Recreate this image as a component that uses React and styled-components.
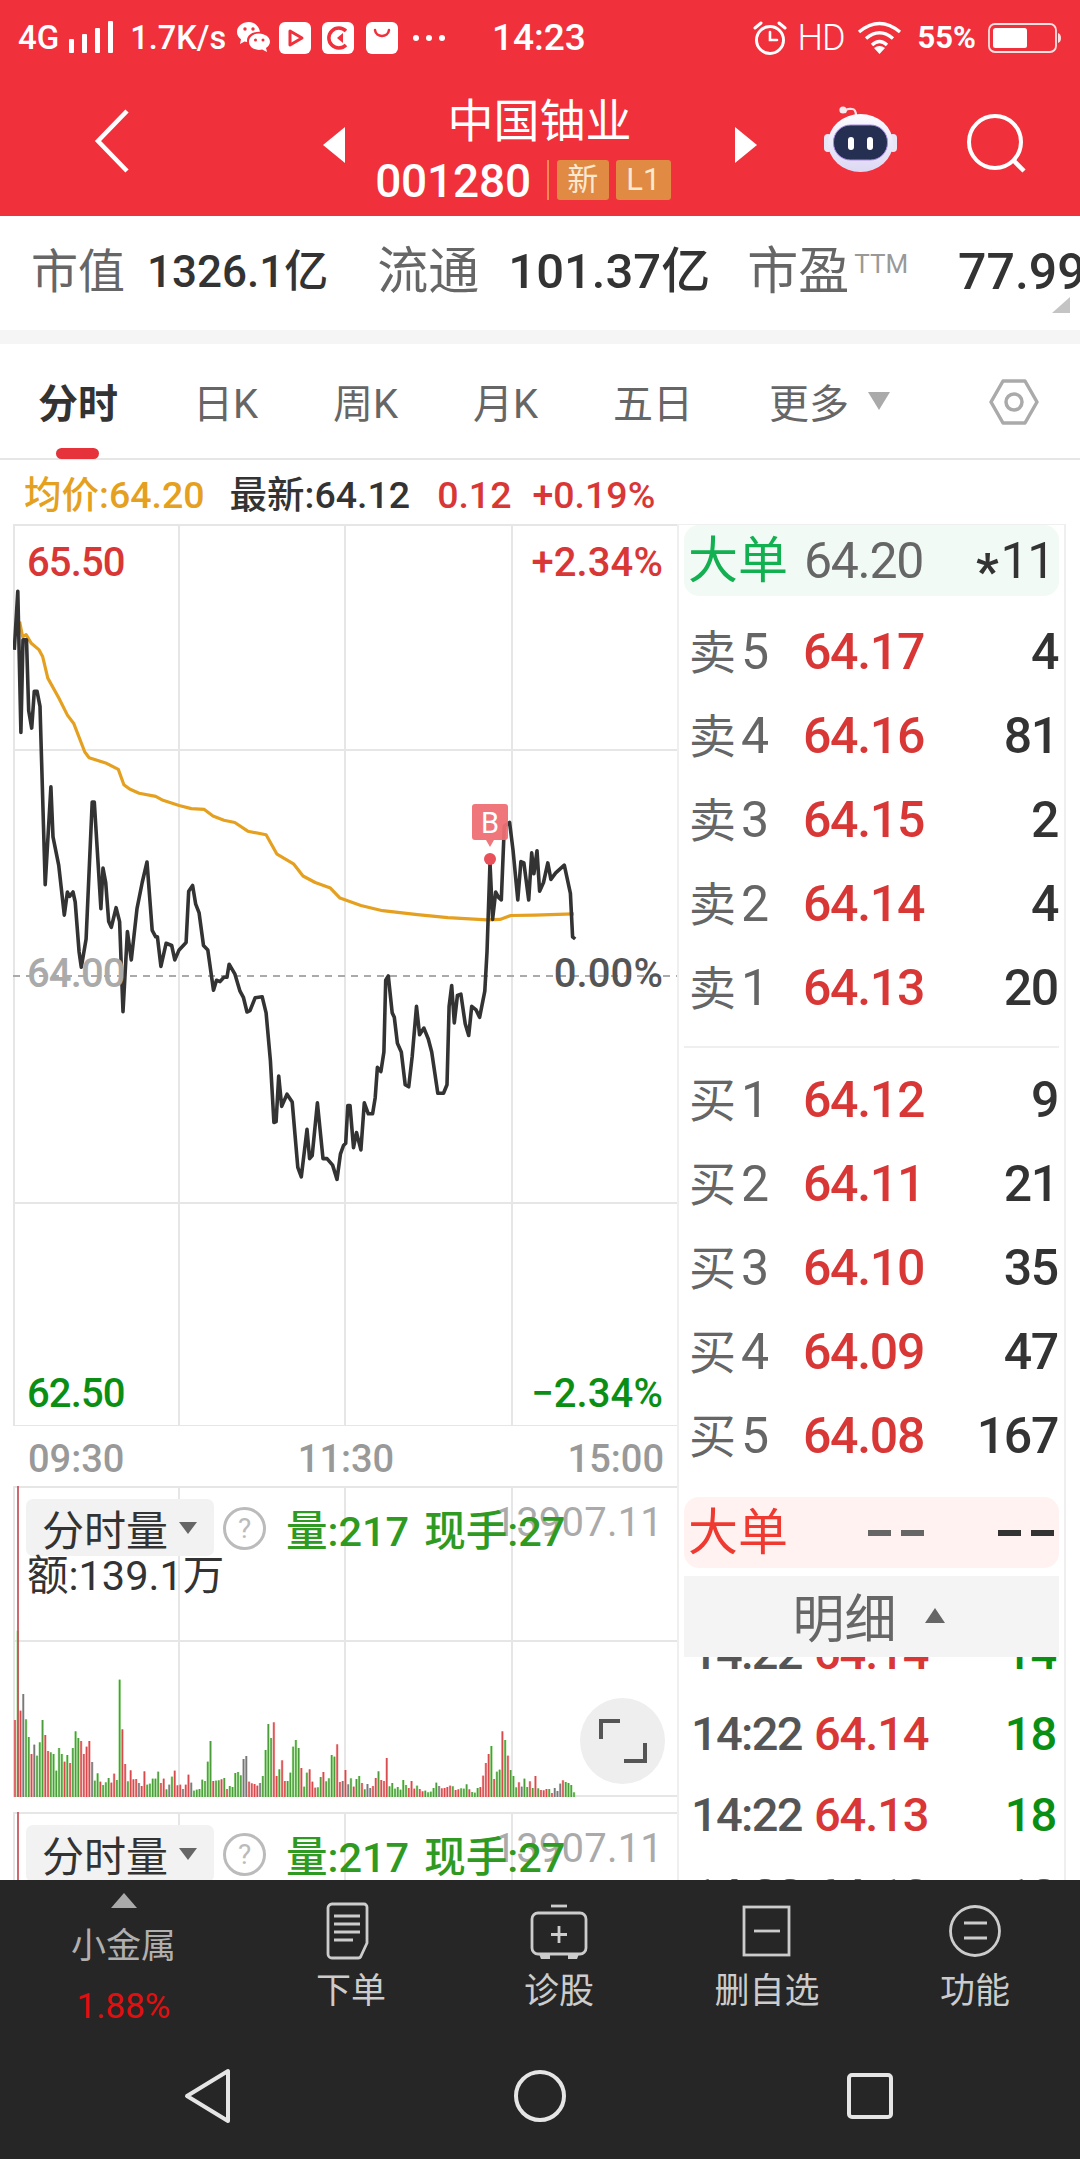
import React from 'react';
import styled, { createGlobalStyle } from 'styled-components';

const Global = createGlobalStyle`
  html, body { margin: 0; padding: 0; background: #fff; }
  body { font-family: Roboto, "Noto Sans CJK SC", sans-serif; }
  * { box-sizing: border-box; }
`;

const RED = '#d93636';
const GREEN = '#0a8f14';

const Page = styled.div`
  width: 1080px; height: 2160px; overflow: hidden; display: flex; flex-direction: column; background: #fff;
`;
const Header = styled.header`
  height: 216px; background: #f0303b; color: #fff; display: flex; flex-direction: column; flex: none;
`;
const StatusBar = styled.div`
  height: 76px; display: flex; align-items: center; padding: 0 18px; font-size: 30px; line-height: 36px; font-weight: 500;
`;
const StatusLeft = styled.div`
  width: 474px; display: flex; align-items: center;
`;
const StatusRight = styled.div`
  margin-left: auto; display: flex; align-items: center;
`;
const StatusText = styled.span`
  margin-left: ${p => p.$ml || 0}px; font-size: ${p => p.$size || 30}px; font-weight: ${p => p.$weight || 500};
  letter-spacing: ${p => p.$ls || 0}px; white-space: nowrap;
`;
const Clock = styled.span`
  font-size: 37px; font-weight: 500; letter-spacing: 0;
`;
const NavBar = styled.div`
  height: 140px; display: flex; align-items: flex-start; position: relative;
`;
const BackIcon = styled.svg`
  width: 40px; height: 66px; margin: 32px 0 0 94px; flex: none;
`;
const Arrow = styled.svg`
  width: 24px; height: 36px; margin: 51px 0 0 ${p => p.$ml}px; flex: none;
`;
const TitleBlock = styled.div`
  width: 387px; display: flex; flex-direction: column; align-items: center; flex: none;
`;
const Title = styled.div`
  font-size: 46px; line-height: 52px; margin-top: 19px;
`;
const CodeRow = styled.div`
  display: flex; align-items: center; height: 42px; margin-top: 12px; margin-right: 26px;
`;
const Code = styled.span`
  font-size: 46px; line-height: 42px; letter-spacing: -.2px; font-weight: 500; position: relative; top: 1px;
`;
const Sep = styled.i`
  width: 2px; height: 40px; background: #f08a50; margin: 0 8px 0 16px;
`;
const Badge = styled.span`
  height: 40px; width: ${p => p.$w}px; margin-right: 7px; background: #e08a44; color: #fbe8d0; border-radius: 3px;
  font-size: 31px; line-height: 40px; text-align: center;
`;
const Robot = styled.svg`
  width: 74px; height: 68px; margin: 30px 0 0 66px; flex: none;
`;
const Search = styled.svg`
  width: 62px; height: 62px; margin: 38px 0 0 68px; flex: none;
`;

const Stats = styled.div`
  height: 114px; flex: none; position: relative; overflow: hidden; display: flex; align-items: center; padding: 0 0 3px 31px; white-space: nowrap;
`;
const StatLabel = styled.span`
  font-size: ${p => p.$size}px; line-height: 60px; color: #666; margin-left: ${p => p.$ml || 0}px;
`;
const StatValue = styled.span`
  font-size: ${p => p.$size}px; line-height: 60px; color: #333; font-weight: 500; margin-left: ${p => p.$ml || 0}px;
`;
const Sup = styled.span`
  font-size: 26px; line-height: 30px; color: #999; align-self: flex-start; margin-top: 33px; margin-left: 5px;
`;
const CornerMark = styled.i`
  position: absolute; right: 10px; bottom: 17px; width: 0; height: 0;
  border-style: solid; border-width: 0 0 16px 18px; border-color: transparent transparent #c4c4c4 transparent;
`;
const Band = styled.div`
  height: 14px; background: #f5f5f5; flex: none;
`;
const Tabs = styled.nav`
  height: 116px; flex: none; position: relative; border-bottom: 2px solid #e6e6e6; display: flex; align-items: center;
`;
const Tab = styled.span`
  position: absolute; left: ${p => p.$x}px; top: 36px; font-size: 40px; line-height: 50px; white-space: nowrap;
  color: ${p => p.$active ? '#333' : '#666'}; font-weight: ${p => p.$active ? 700 : 400};
`;
const Indicator = styled.i`
  position: absolute; left: 56px; bottom: -1px; width: 43px; height: 11px; background: #e6323a; border-radius: 6px;
`;
const MoreTri = styled.i`
  position: absolute; left: 868px; top: 48px; width: 0; height: 0; border-style: solid; border-width: 18px 11px 0 11px;
  border-color: #aaa transparent transparent transparent;
`;
const HexIcon = styled.svg`
  position: absolute; left: 989px; top: 34px; width: 50px; height: 48px;
`;
const Info = styled.div`
  height: 64px; flex: none; display: flex; align-items: center; padding: 6px 0 0 24px; font-size: 37.5px; line-height: 50px; white-space: nowrap; font-weight: 500;
`;
const InfoItem = styled.span`
  color: ${p => p.$c}; margin-left: ${p => p.$ml || 0}px;
`;
const Main = styled.div`
  flex: none; height: 1356px; display: flex; padding-left: 13px; overflow: hidden;
`;
const LeftCol = styled.div`
  width: 664px; flex: none; display: flex; flex-direction: column;
`;
const Chart = styled.div`
  width: 664px; height: 902px; flex: none; position: relative;
`;
const ChartSvg = styled.svg`
  display: block; width: 664px; height: ${p => p.$h}px;
`;
const AxisLabel = styled.span`
  position: absolute; font-size: 40px; line-height: 48px; font-weight: 500; white-space: nowrap; color: ${p => p.$c};
  top: ${p => p.$top}px;
  ${p => p.$left != null ? `left: ${p.$left}px; letter-spacing: -.9px;` : `right: ${p.$right}px; letter-spacing: .1px;`}
`;
const TimeAxis = styled.div`
  height: 60px; flex: none; display: flex; justify-content: space-between; align-items: center; padding: 5px 13px 0 15px;
  font-size: 38px; line-height: 48px; color: #999; font-weight: 500;
`;
const VolPanel = styled.div`
  width: 664px; height: ${p => p.$h}px; flex: none; position: relative; margin-top: ${p => p.$mt || 0}px;
`;
const VolHead = styled.div`
  position: absolute; left: 13px; top: 13px; right: 0; display: flex; align-items: flex-start;
`;
const Pill = styled.div`
  width: 188px; height: 57px; background: #f2f2f2; border-radius: 7px; display: flex; align-items: center; padding: 9px 0 0 16px; font-size: 42px; line-height: 48px; color: #333; flex: none;
`;
const PillTri = styled.i`
  margin: -8px 0 0 11px; width: 0; height: 0; border-style: solid; border-width: 12px 9px 0 9px; border-color: #666 transparent transparent transparent;
`;
const Help = styled.span`
  width: 43px; height: 43px; border-radius: 50%; border: 3px solid #bbb; color: #bbb; margin: 8px 0 0 9px; flex: none;
  font-size: 28px; line-height: 37px; text-align: center;
`;
const VolText = styled.span`
  color: #2f9a22; font-size: 41.5px; line-height: 50px; font-weight: 500; margin: 8px 0 0 ${p => p.$ml}px; white-space: nowrap; position: relative; z-index: 1;
`;
const MaxVal = styled.span`
  position: absolute; right: 14px; top: -1px; color: #aaa; font-size: 40px; line-height: 50px; white-space: nowrap; letter-spacing: .2px;
`;
const Amount = styled.div`
  position: absolute; left: 14px; top: 65px; color: #333; font-size: 41.5px; line-height: 50px; white-space: nowrap;
`;
const FullBtn = styled.div`
  position: absolute; left: 567px; top: 212px; width: 85px; height: 86px; border-radius: 50%; background: #eee; display: flex; align-items: center; justify-content: center;
`;

const RightCol = styled.aside`
  width: 389px; flex: none; border-left: 2px solid #efefef; border-right: 2px solid #efefef; border-top: 2px solid #efefef; padding: 0 5px; margin-top: -1px; display: flex; flex-direction: column;
`;
const BigRow = styled.div`
  height: 71px; flex: none; background: ${p => p.$bg}; border-radius: 15px; display: grid; grid-template-columns: 116px 1fr auto; align-items: center; padding: 0 5px 0 4px; margin-top: ${p => p.$mt || 0}px;
`;
const BigLabel = styled.span`
  font-size: 50px; line-height: 60px; color: ${p => p.$c};
`;
const QuoteList = styled.div`
  display: flex; flex-direction: column; margin-top: ${p => p.$mt}px; flex: none;
`;
const Quote = styled.div`
  height: 84px; display: grid; grid-template-columns: 114px 1fr auto; align-items: center; padding: 0 1px 0 5px;
`;
const QLabel = styled.span`
  font-size: 47px; line-height: 60px; color: #666; white-space: nowrap;
`;
const QDigit = styled.span`
  font-size: 50px; margin-left: 5px; letter-spacing: -1px;
`;
const Num = styled.span`
  font-size: 50px; line-height: 60px; letter-spacing: -1.3px; color: ${p => p.$c}; font-weight: ${p => p.$w || 400}; white-space: nowrap;
`;
const Star = styled.span`
  display: inline-block; font-size: 50px; line-height: 50px; margin-right: 3px; font-weight: 700; transform: translateY(11px);
`;
const Dashes = styled.span`
  display: flex; gap: 10px; justify-content: ${p => p.$end ? 'flex-end' : 'flex-start'}; padding-left: ${p => p.$pl || 0}px;
`;
const Dash = styled.i`
  width: 23px; height: 6px; background: ${p => p.$c};
`;
const Divider = styled.div`
  height: 2px; background: #efefef; margin-top: 16px; flex: none;
`;
const DetailHead = styled.div`
  height: 81px; flex: none; margin-top: 8px; background: #f4f4f4; display: flex; align-items: center; justify-content: center; padding: 8px 6px 0 0; font-size: 52px; line-height: 60px; color: #666; position: relative; z-index: 1;
`;
const UpTri = styled.i`
  margin: -10px 0 0 28px; width: 0; height: 0; border-style: solid; border-width: 0 10.5px 15px 10.5px; border-color: transparent transparent #666 transparent;
`;
const DetailList = styled.div`
  flex: 1; min-height: 0; overflow: hidden;
`;
const DetailInner = styled.div`
  margin-top: -45px;
`;
const DetailRow = styled.div`
  height: 81px; display: grid; grid-template-columns: 123px 1fr auto; align-items: center; padding: 0 3px 0 7px;
`;
const DNum = styled.span`
  font-size: 47px; line-height: 60px; letter-spacing: ${p => p.$ls || -1.1}px; font-weight: 500; color: ${p => p.$c}; white-space: nowrap;
`;

const Toolbar = styled.footer`
  height: 279px; flex: none; background: #262626; display: flex; flex-direction: column;
`;
const ToolRow = styled.div`
  height: 172px; display: grid; grid-template-columns: 247px repeat(4, 208px); flex: none;
`;
const ToolItem = styled.div`
  display: flex; flex-direction: column; align-items: center; padding-top: ${p => p.$pt || 0}px;
`;
const ToolIcon = styled.svg`
  width: 62px; height: 58px; display: block;
`;
const ToolLabel = styled.span`
  font-size: 35px; line-height: 44px; color: ${p => p.$c || '#ccc'}; margin-top: ${p => p.$mt || 0}px; white-space: nowrap;
`;
const UpSmall = styled.i`
  width: 0; height: 0; border-style: solid; border-width: 0 13px 15px 13px; border-color: transparent transparent #aaa transparent;
`;
const AndroidNav = styled.div`
  flex: 1; position: relative; display: flex; align-items: flex-start;
`;
const NavKey = styled.svg`
  width: 60px; height: 60px; margin: 14px 0 0 ${p => p.$ml}px; flex: none;
`;

/* ---------- chart data (page coordinates, traced from the picture) ---------- */
const price = [33,255,41,120,48,445,53,232,61,232,66,395,73,435,79,350,85,350,92,385,104,795,117,570,122,685,135,750,148,865,155,812,160,822,168,812,173,835,182,950,187,985,198,920,212,605,217,605,232,850,237,757,243,790,250,880,256,893,267,848,275,880,283,1087,293,903,302,968,315,850,327,790,338,743,350,900,358,915,362,915,370,983,382,930,395,935,402,968,412,945,428,928,434,810,443,797,450,840,458,860,468,935,478,945,491,1038,498,1015,506,1018,515,1008,522,1008,527,978,540,1000,552,1040,560,1055,568,1088,575,1085,587,1055,603,1053,612,1090,622,1200,630,1342,635,1340,641,1235,648,1305,660,1277,672,1295,685,1445,693,1467,706,1358,712,1425,718,1418,730,1297,743,1425,752,1425,765,1440,775,1473,783,1415,790,1395,795,1390,800,1303,805,1303,813,1400,820,1365,830,1405,838,1297,847,1322,857,1322,863,1285,868,1215,876,1225,883,1180,887,1015,893,1005,902,1090,907,1100,914,1160,923,1180,932,1255,940,1260,948,1190,958,1075,965,1140,975,1125,985,1150,993,1180,1007,1275,1020,1275,1028,1255,1033,1075,1039,1027,1045,1113,1052,1050,1060,1047,1070,1115,1078,1142,1085,1075,1095,1083,1103,1100,1115,1040,1120,950,1127,745,1133,875,1140,812,1147,825,1153,830,1160,660,1172,652,1180,715,1191,830,1198,742,1205,745,1216,830,1223,722,1228,770,1235,717,1241,810,1250,790,1260,745,1267,783,1278,768,1298,750,1312,815,1317,915,1323,920];
const avg = [45,190,52,225,60,220,72,240,90,255,98,270,110,320,135,365,155,405,170,425,195,490,205,503,245,516,272,530,285,565,298,575,320,585,358,592,375,601,412,613,440,620,470,622,490,637,515,647,540,652,570,672,612,680,637,725,675,747,697,775,725,790,760,803,782,826,830,843,880,855,960,864,1030,871,1120,876,1150,875,1175,866,1230,865,1320,862];
const toPts = a => {
  const out = [];
  for (let i = 0; i < a.length; i += 2) out.push(`${(a[i] / 2.3).toFixed(1)},${(540 + a[i + 1] / 2.3).toFixed(1)}`);
  return out.join(' ');
};

const barsA = 'r243 g-25 r215 x165 g241 g294 r345 x317 g350 g310 g243 r288 r336 g340 g345 g395 g327 g345 r368 g348 r372 g327 g277 g297 r306 r345 r323 r306 x369 g425 g403 r428 g438 g430 g417 r431 r404 g423 g122 r271 r375 g427 r394 r421 r420 x432 r441 r397 g437 g434 g419 g419 g398 r432 r419 g451 x437 g413 r395 r439 r437 x450 r437 r407 x431 g455 g452 g450 g422 g426 g368 g306 r426 g425 g424 r421 g417 r450 g441 g444 g402 g399 g409 x360 x351 r428 r433 r435 r440 x432 g411 g333 g255 g297 r250 r411 g391 r364 r426 g426 g401 g323 g303 g327'.split(' ');
const barsB = 'r387 g443 g401 r391 r428 r446 g445 g414 r399 g427 g418 g348 g353 r316 r429 x426 r393 x436 g418 r443 g420 g411 r432 g451 x435 x447 r441 r417 g397 r423 r426 r357 g442 g432 g449 g444 g452 g423 g438 r447 r426 r449 g440 r450 r457 g455 g460 g458 g447 g431 x441 r448 r447 r444 r440 g442 r453 r451 g448 g449 g436 r451 g459 g461 g447 r444 r410 r372 r345 g321 r420 g398 g392 r277 g303 r350 g393 g411 g445 r430 x443 g419 g444 r427 g447 r411 g448 r453 r454 r450 g450 r462 x447 x456 x434 r424 g429 g432 g438 g460'.split(' ');
const allBars = [...barsA, ...barsB];
const bars = allBars.map((b, i) => ({
  x: 15 + ((574 - 15) / (allBars.length - 1)) * i,
  top: Number(b.slice(1)),
  k: b[0],
}));
const barC = {
  r: ['#f6b4b4', '#d9484c'],
  g: ['#a9e49c', '#4c9c3c'],
  x: ['#c4c4c4', '#777'],
};

const Sig = () => (
  <svg width="46" height="34" viewBox="0 0 46 34" style={{ marginLeft: 9, flex: 'none' }}>
    <g fill="#fff"><rect x="1" y="18" width="5" height="14" rx="1" /><rect x="14" y="13" width="5" height="19" rx="1" /><rect x="27" y="7" width="5" height="25" rx="1" /><rect x="40" y="0" width="5" height="32" rx="1" /></g>
  </svg>
);
const WeChat = () => (
  <svg width="34" height="34" viewBox="0 0 34 34" style={{ marginLeft: 10, flex: 'none' }}>
    <path fill="#fff" d="M13 1C6 1 1 5.500 1 11c0 3 1.500 5.500 4 7.300L4 23l4.500-2.500c1 .3 1.700.4 2.700.5C10 15 15.500 10.500 24 10.800 23 5 18.500 1 13 1z" />
    <path fill="#fff" d="M23 12.500c-5.500 0-10 3.600-10 8.200s4.500 8.200 10 8.200c1.200 0 2.200-.2 3.200-.5L31 31l-1-4c2.400-1.500 4-3.800 4-6.300 0-4.600-5.200-8.200-11-8.200z" />
    <g fill="#f0303b"><circle cx="9" cy="8" r="1.700" /><circle cx="17" cy="8" r="1.700" /><circle cx="19.500" cy="19" r="1.500" /><circle cx="27" cy="19" r="1.500" /></g>
  </svg>
);
const AppIcon = ({ ml, children }) => (
  <svg width="32" height="32" viewBox="0 0 32 32" style={{ marginLeft: ml, flex: 'none' }}>
    <rect width="32" height="32" rx="6" fill="#fff" />
    {children}
  </svg>
);

const Robo = () => (
  <Robot viewBox="0 0 74 68">
    <defs>
      <linearGradient id="hd" x1="0" y1="0" x2="0" y2="1"><stop offset="0" stopColor="#fbfbff" /><stop offset="1" stopColor="#dcd8f4" /></linearGradient>
    </defs>
    <path d="M21 7 C22 2 25 3 28 3 C31 3 32 5 32 10" fill="none" stroke="#f4e2e6" strokeWidth="2.200" />
    <circle cx="19" cy="4" r="3.600" fill="#f7eaee" />
    <rect x="0" y="28" width="8" height="18" rx="4" fill="#e8e6f6" />
    <rect x="65" y="28" width="8" height="18" rx="4" fill="#e8e6f6" />
    <ellipse cx="36.500" cy="37" rx="32.500" ry="29" fill="url(#hd)" />
    <rect x="9.500" y="19" width="54" height="35" rx="17" fill="#252f52" stroke="#a98ae0" strokeWidth="1" />
    <rect x="24" y="31" width="6" height="13" rx="3" fill="#fff" />
    <rect x="43" y="31" width="6" height="13" rx="3" fill="#fff" />
  </Robot>
);

const VolHeader = () => (
  <VolHead>
    <MaxVal>13907.11</MaxVal>
    <Pill>分时量<PillTri /></Pill>
    <Help>?</Help>
    <VolText $ml={20}>量:217</VolText>
    <VolText $ml={15}>现手:27</VolText>
  </VolHead>
);

const sell = [['卖', '5', '64.17', '4'], ['卖', '4', '64.16', '81'], ['卖', '3', '64.15', '2'], ['卖', '2', '64.14', '4'], ['卖', '1', '64.13', '20']];
const buy = [['买', '1', '64.12', '9'], ['买', '2', '64.11', '21'], ['买', '3', '64.10', '35'], ['买', '4', '64.09', '47'], ['买', '5', '64.08', '167']];
const details = [['14:22', '64.14', '14'], ['14:22', '64.14', '18'], ['14:22', '64.13', '18'], ['14:22', '64.13', '12']];

const QuoteRows = ({ rows, mt }) => (
  <QuoteList $mt={mt}>
    {rows.map(([l, d, p, v]) => (
      <Quote key={l + d}>
        <QLabel>{l}<QDigit>{d}</QDigit></QLabel>
        <Num $c={RED} $w={500}>{p}</Num>
        <Num $c="#333" $w={500}>{v}</Num>
      </Quote>
    ))}
  </QuoteList>
);

export default function App() {
  return (
    <Page>
      <Global />
      <Header>
        <StatusBar>
          <StatusLeft>
            <StatusText $size={33}>4G</StatusText>
            <Sig />
            <StatusText $ml={16} $size={32.5}>1.7K/s</StatusText>
            <WeChat />
            <AppIcon ml={9}>
              <path d="M11 9 L23 16 L11 23 Z" fill="none" stroke="#f0303b" strokeWidth="3" strokeLinejoin="round" />
            </AppIcon>
            <AppIcon ml={11}>
              <path d="M24 9 A10 10 0 1 0 24 23" fill="none" stroke="#f0303b" strokeWidth="3.500" />
              <path d="M15 16 L21 11 L21 21 Z" fill="#f0303b" />
            </AppIcon>
            <AppIcon ml={12}>
              <path d="M9 8 C10 16 22 16 23 8" fill="none" stroke="#f0303b" strokeWidth="2.500" strokeLinecap="round" />
            </AppIcon>
            <svg width="34" height="8" viewBox="0 0 34 8" style={{ marginLeft: 14, flex: 'none' }}>
              <g fill="#fff"><circle cx="4" cy="4" r="3" /><circle cx="17" cy="4" r="3" /><circle cx="30" cy="4" r="3" /></g>
            </svg>
          </StatusLeft>
          <Clock>14:23</Clock>
          <StatusRight>
            <svg width="36" height="34" viewBox="0 0 36 34" style={{ flex: 'none' }}>
              <g fill="none" stroke="#fff" strokeWidth="3" strokeLinecap="round">
                <circle cx="18" cy="19" r="13.500" />
                <path d="M18 11 V19 H25" strokeWidth="2.600" />
                <path d="M3 7 L9 2" /><path d="M33 7 L27 2" />
              </g>
            </svg>
            <StatusText $ml={9} $size={36} $weight={300} $ls={-1}>HD</StatusText>
            <svg width="45" height="34" viewBox="0 0 45 34" style={{ marginLeft: 12, flex: 'none' }}>
              <g fill="none" stroke="#fff" strokeWidth="3.400">
                <path d="M2 11 Q22.500 -6 43 11" /><path d="M9 17.500 Q22.500 6 36 17.500" /><path d="M15 24 Q22.500 17 30 24" />
              </g>
              <path d="M22.500 33 L17 27 Q22.500 23 28 27 Z" fill="#fff" />
            </svg>
            <StatusText $ml={16} $size={31} $weight={700}>55%</StatusText>
            <svg width="74" height="30" viewBox="0 0 74 30" style={{ marginLeft: 12, flex: 'none' }}>
              <rect x="1" y="1" width="67" height="28" rx="6" fill="none" stroke="#fff" strokeWidth="1.800" opacity=".85" />
              <rect x="5" y="5" width="34" height="20" rx="2.500" fill="#fff" />
              <path d="M70 10 Q73 11 73 15 Q73 19 70 20 Z" fill="#fff" opacity=".85" />
            </svg>
          </StatusRight>
        </StatusBar>
        <NavBar>
          <BackIcon viewBox="0 0 40 66">
            <path d="M33 3 L4 33 L33 63" fill="none" stroke="#fff" strokeWidth="4.500" />
          </BackIcon>
          <Arrow $ml={188} viewBox="0 0 24 36"><path d="M23 0 V36 L1 18 Z" fill="#fff" /></Arrow>
          <TitleBlock>
            <Title>中国铀业</Title>
            <CodeRow>
              <Code>001280</Code>
              <Sep />
              <Badge $w={52}>新</Badge>
              <Badge $w={55}>L1</Badge>
            </CodeRow>
          </TitleBlock>
          <Arrow $ml={1} viewBox="0 0 24 36"><path d="M1 0 V36 L23 18 Z" fill="#fff" /></Arrow>
          <Robo />
          <Search viewBox="0 0 62 62">
            <circle cx="29" cy="28" r="26" fill="none" stroke="#fff" strokeWidth="4" />
            <path d="M47 46 L58 57" stroke="#fff" strokeWidth="4.500" />
          </Search>
        </NavBar>
      </Header>

      <Stats>
        <StatLabel $size={47}>市值</StatLabel>
        <StatValue $size={44} $ml={22}>1326.1亿</StatValue>
        <StatLabel $size={51} $ml={49}>流通</StatLabel>
        <StatValue $size={49} $ml={29}>101.37亿</StatValue>
        <StatLabel $size={51} $ml={37}>市盈</StatLabel>
        <Sup>TTM</Sup>
        <StatValue $size={50} $ml={50}>77.99</StatValue>
        <CornerMark />
      </Stats>
      <Band />
      <Tabs>
        <Tab $x={38} $active>分时</Tab>
        <Tab $x={193}>日K</Tab>
        <Tab $x={333}>周K</Tab>
        <Tab $x={473}>月K</Tab>
        <Tab $x={613}>五日</Tab>
        <Tab $x={769}>更多</Tab>
        <MoreTri />
        <HexIcon viewBox="0 0 50 48">
          <path d="M14 3 H36 L48 24 L36 45 H14 L2 24 Z" fill="none" stroke="#aaa" strokeWidth="3.500" strokeLinejoin="round" />
          <circle cx="25" cy="24" r="8" fill="none" stroke="#aaa" strokeWidth="3.500" />
        </HexIcon>
        <Indicator />
      </Tabs>
      <Info>
        <InfoItem $c="#e5a020">均价:64.20</InfoItem>
        <InfoItem $c="#333" $ml={25}>最新:64.12</InfoItem>
        <InfoItem $c={RED} $ml={27}>0.12</InfoItem>
        <InfoItem $c={RED} $ml={21}>+0.19%</InfoItem>
      </Info>

      <Main>
        <LeftCol>
          <Chart>
            <ChartSvg $h={902} viewBox="13 525 664 902">
              <g stroke="#e6e6e6" strokeWidth="2" fill="none">
                <path d="M14 525 V1427 M179 525 V1427 M345 525 V1427 M512 525 V1427" />
                <path d="M13 526 H677 M13 751 H677 M13 1204 H677 M13 1427 H677" />
              </g>
              <path d="M13 977 H677" stroke="#aaa" strokeWidth="2" strokeDasharray="7 6" />
              <polyline points={toPts(avg)} fill="none" stroke="#e5a020" strokeWidth="3.200" strokeLinejoin="round" />
              <polyline points={toPts(price)} fill="none" stroke="#333" strokeWidth="3.600" strokeLinejoin="round" />
              <path d="M472 808 a3 3 0 0 1 3 -3 h30 a3 3 0 0 1 3 3 v30 a3 3 0 0 1 -3 3 h-11 l-4 7 l-4 -7 h-11 a3 3 0 0 1 -3 -3 z" fill="#ee6f74" fillOpacity=".95" />
              <text x="490" y="834" fontSize="29" textAnchor="middle" fill="#fff" fontFamily="Roboto">B</text>
              <circle cx="490" cy="860" r="6" fill="#e8505a" />
            </ChartSvg>
            <AxisLabel $c={RED} $top={15} $left={14}>65.50</AxisLabel>
            <AxisLabel $c={RED} $top={15} $right={14}>+2.34%</AxisLabel>
            <AxisLabel $c="#aaa" $top={426} $left={14}>64.00</AxisLabel>
            <AxisLabel $c="#555" $top={426} $right={14}>0.00%</AxisLabel>
            <AxisLabel $c={GREEN} $top={846} $left={14}>62.50</AxisLabel>
            <AxisLabel $c={GREEN} $top={846} $right={14}>−2.34%</AxisLabel>
          </Chart>
          <TimeAxis>
            <span>09:30</span><span>11:30</span><span>15:00</span>
          </TimeAxis>
          <VolPanel $h={312}>
            <ChartSvg $h={312} viewBox="13 1487 664 312">
              <g stroke="#e6e6e6" strokeWidth="2" fill="none">
                <path d="M14 1487 V1798 M179 1487 V1798 M345 1487 V1798 M512 1487 V1798" />
                <path d="M13 1488 H677 M13 1642 H677 M13 1797 H677" />
              </g>
              {bars.map((b, i) => {
                const y = 1640 + b.top / 3;
                const [l, d] = barC[b.k];
                return (
                  <g key={i}>
                    <rect x={b.x - 1.300} y={y} width="2.600" height={1798 - y} fill={l} />
                    <rect x={b.x - .7} y={y} width="1.400" height={1798 - y} fill={d} />
                  </g>
                );
              })}
              <path d="M18 1487 V1798" stroke="#c8595f" strokeWidth="1.800" />
            </ChartSvg>
            <VolHeader />
            <Amount>额:139.1万</Amount>
            <FullBtn>
              <svg width="48" height="44" viewBox="0 0 48 44">
                <path d="M2 20 V2 H21 M46 24 V42 H25" fill="none" stroke="#555" strokeWidth="4" />
              </svg>
            </FullBtn>
          </VolPanel>
          <VolPanel $h={80} $mt={14}>
            <ChartSvg $h={80} viewBox="13 1813 664 80">
              <g stroke="#e6e6e6" strokeWidth="2" fill="none">
                <path d="M14 1813 V1893 M179 1813 V1893 M345 1813 V1893 M512 1813 V1893" />
                <path d="M13 1814 H677" />
              </g>
              <path d="M18 1813 V1893" stroke="#c8595f" strokeWidth="1.800" />
            </ChartSvg>
            <VolHeader />
          </VolPanel>
        </LeftCol>

        <RightCol>
          <BigRow $bg="#f1faf5">
            <BigLabel $c="#12b050">大单</BigLabel>
            <Num $c="#666">64.20</Num>
            <Num $c="#333"><Star>*</Star>11</Num>
          </BigRow>
          <QuoteRows rows={sell} mt={14} />
          <Divider />
          <QuoteRows rows={buy} mt={10} />
          <BigRow $bg="#fff2f1" $mt={19}>
            <BigLabel $c="#ee3a30">大单</BigLabel>
            <Dashes $pl={64}><Dash $c="#666" /><Dash $c="#666" /></Dashes>
            <Dashes $end><Dash $c="#333" /><Dash $c="#333" /></Dashes>
          </BigRow>
          <DetailHead>明细<UpTri /></DetailHead>
          <DetailList>
            <DetailInner>
              {details.map(([t, p, v], i) => (
                <DetailRow key={i}>
                  <DNum $c="#555" $ls={-1.7}>{t}</DNum>
                  <DNum $c={RED}>{p}</DNum>
                  <DNum $c={GREEN}>{v}</DNum>
                </DetailRow>
              ))}
            </DetailInner>
          </DetailList>
        </RightCol>
      </Main>

      <Toolbar>
        <ToolRow>
          <ToolItem $pt={13}>
            <UpSmall />
            <ToolLabel $c="#b0b0b0" $mt={17}>小金属</ToolLabel>
            <ToolLabel $c="#e01010" $mt={16}>1.88%</ToolLabel>
          </ToolItem>
          <ToolItem $pt={22}>
            <ToolIcon viewBox="0 0 62 58">
              <g fill="none" stroke="#ccc" strokeWidth="2.800">
                <path d="M12 2 H44 a3 3 0 0 1 3 3 V41 L41 54 a3 3 0 0 1 -3 2 H12 a4 4 0 0 1 -4 -4 V6 a4 4 0 0 1 4 -4 Z" />
                <path d="M14 14 H40 M14 22 H40 M14 30 H40 M14 38 H33" />
              </g>
            </ToolIcon>
            <ToolLabel $mt={10}>下单</ToolLabel>
          </ToolItem>
          <ToolItem $pt={22}>
            <ToolIcon viewBox="0 0 62 58">
              <g fill="none" stroke="#ccc" strokeWidth="2.800">
                <path d="M23 4 H39" />
                <rect x="4" y="11" width="54" height="41" rx="6" />
                <path d="M31 24 V41 M23 32.500 H39" />
              </g>
              <path d="M11 52 H22 V57 H13 Z M40 52 H51 L49 57 H40 Z" fill="#ccc" />
            </ToolIcon>
            <ToolLabel $mt={10}>诊股</ToolLabel>
          </ToolItem>
          <ToolItem $pt={22}>
            <ToolIcon viewBox="0 0 62 58">
              <g fill="none" stroke="#ccc" strokeWidth="2.800">
                <rect x="8" y="5" width="45" height="48" />
                <path d="M18 29 H44" />
              </g>
            </ToolIcon>
            <ToolLabel $mt={10}>删自选</ToolLabel>
          </ToolItem>
          <ToolItem $pt={22}>
            <ToolIcon viewBox="0 0 62 58">
              <g fill="none" stroke="#ccc" strokeWidth="2.800">
                <circle cx="31" cy="29" r="24.500" />
                <path d="M20 21 H43 M20 36 H43" />
              </g>
            </ToolIcon>
            <ToolLabel $mt={10}>功能</ToolLabel>
          </ToolItem>
        </ToolRow>
        <AndroidNav>
          <NavKey $ml={177} viewBox="0 0 60 60">
            <path d="M51 5 V55 L10 30 Z" fill="none" stroke="#e5e5e5" strokeWidth="4" strokeLinejoin="round" />
          </NavKey>
          <NavKey $ml={273} viewBox="0 0 60 60">
            <circle cx="30" cy="30" r="24" fill="none" stroke="#e5e5e5" strokeWidth="4" />
          </NavKey>
          <NavKey $ml={270} viewBox="0 0 60 60">
            <rect x="9" y="9" width="42" height="42" rx="3" fill="none" stroke="#e5e5e5" strokeWidth="4" />
          </NavKey>
        </AndroidNav>
      </Toolbar>
    </Page>
  );
}
